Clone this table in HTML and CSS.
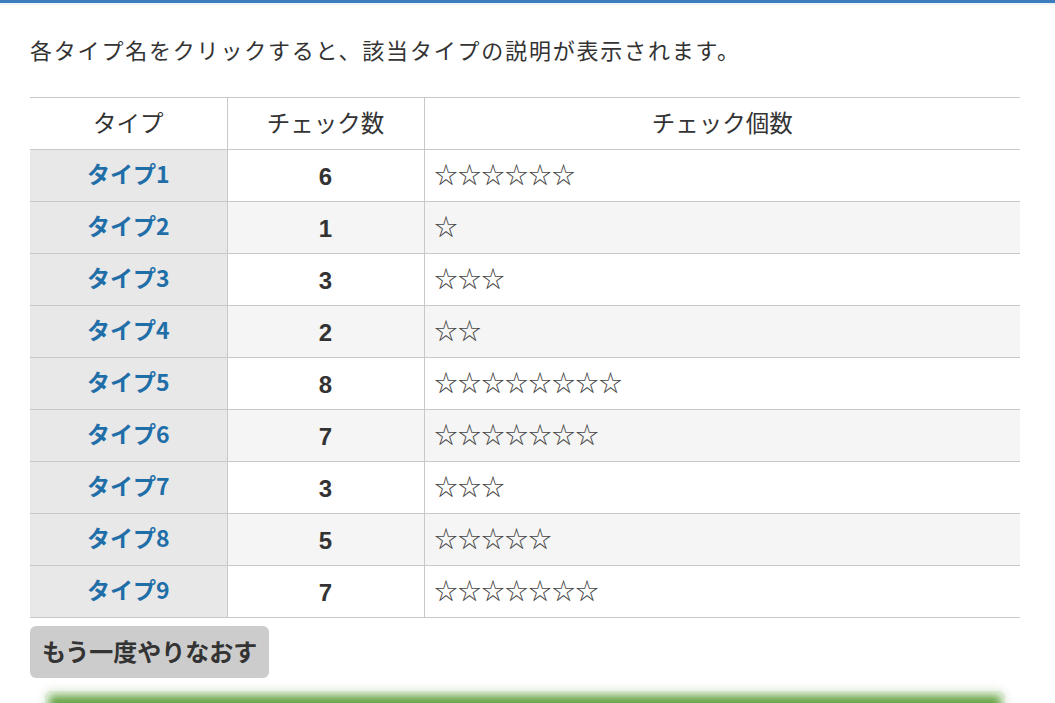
FILE: index.html
```html
<!DOCTYPE html>
<html lang="ja">
<head>
    <meta charset="UTF-8" />
    <meta name="viewport" content="width=device-width, initial-scale=1.0" />
    <title>診断結果</title>
    <link rel="stylesheet" href="styles.css">
</head>
<body>
    <div class="top-bar"></div>
    <div class="container">
        <p class="lead">各タイプ名をクリックすると、該当タイプの説明が表示されます。</p>
        <table class="result-table">
            <thead>
                <tr>
                    <th class="col-type">タイプ</th>
                    <th class="col-count">チェック数</th>
                    <th>チェック個数</th>
                </tr>
            </thead>
            <tbody>
                <tr><td class="type-name"><a href="#">タイプ1</a></td><td class="count">6</td><td class="stars">☆☆☆☆☆☆</td></tr>
                <tr><td class="type-name"><a href="#">タイプ2</a></td><td class="count">1</td><td class="stars">☆</td></tr>
                <tr><td class="type-name"><a href="#">タイプ3</a></td><td class="count">3</td><td class="stars">☆☆☆</td></tr>
                <tr><td class="type-name"><a href="#">タイプ4</a></td><td class="count">2</td><td class="stars">☆☆</td></tr>
                <tr><td class="type-name"><a href="#">タイプ5</a></td><td class="count">8</td><td class="stars">☆☆☆☆☆☆☆☆</td></tr>
                <tr><td class="type-name"><a href="#">タイプ6</a></td><td class="count">7</td><td class="stars">☆☆☆☆☆☆☆</td></tr>
                <tr><td class="type-name"><a href="#">タイプ7</a></td><td class="count">3</td><td class="stars">☆☆☆</td></tr>
                <tr><td class="type-name"><a href="#">タイプ8</a></td><td class="count">5</td><td class="stars">☆☆☆☆☆</td></tr>
                <tr><td class="type-name"><a href="#">タイプ9</a></td><td class="count">7</td><td class="stars">☆☆☆☆☆☆☆</td></tr>
            </tbody>
        </table>
        <button type="button" class="retry-btn">もう一度やりなおす</button>
        <div class="next-wrap">
            <button type="button" class="next-btn"></button>
        </div>
    </div>
</body>
</html>
```

FILE: styles.css
```css
/* Global Styles */
body {
    margin: 0;
    font-family: "Noto Sans CJK JP", "Noto Sans", sans-serif;
    color: #333;
    background-color: #fff;
}

.top-bar {
    height: 3px;
    background-color: #3d7dbd;
    border-bottom: 2px solid #eef3f8;
}

.container {
    padding: 0 35px 0 30px;
}

.lead {
    font-size: 22px;
    line-height: 32px;
    margin: 28px 0 32px;
    letter-spacing: 1.8px;
}

/* Result table */
.result-table {
    width: 100%;
    border-collapse: collapse;
    border-top: 1px solid #c8c8c8;
    border-bottom: 1px solid #c8c8c8;
}

.result-table th,
.result-table td {
    height: 52px;
    padding: 0 10px;
    border-bottom: 1px solid #c8c8c8;
    box-sizing: border-box;
}

.result-table th {
    font-size: 23.5px;
    font-weight: normal;
    text-align: center;
    padding-bottom: 3px;
}

.result-table th + th,
.result-table td + td {
    border-left: 1px solid #c8c8c8;
}

.col-type,
.col-count {
    width: 197px;
}

.result-table tbody tr:nth-child(even) {
    background-color: #f5f5f5;
}

.type-name {
    background-color: #e8e8e8;
    text-align: center;
    font-size: 23px;
    font-weight: bold;
    padding-bottom: 5px !important;
}

.type-name a {
    color: #1f6ea8;
    text-decoration: none;
}

.count {
    text-align: center;
    font-family: "Liberation Sans", "Noto Sans", sans-serif;
    font-size: 24px;
    font-weight: bold;
    padding-top: 3px !important;
}

.stars {
    font-size: 23px;
    letter-spacing: 0.5px;
    color: #444;
    padding-bottom: 5px !important;
}

/* Buttons */
.retry-btn {
    display: block;
    margin-top: 8px;
    background-color: #cccccc;
    color: #333;
    border: none;
    border-radius: 6px;
    padding: 0 12px 3px;
    height: 52px;
    font-family: inherit;
    font-size: 24px;
    font-weight: bold;
    cursor: pointer;
}

.next-wrap {
    padding: 13px 15px 0;
}

.next-btn {
    display: block;
    width: 100%;
    height: 40px;
    border: none;
    border-radius: 8px;
    background: linear-gradient(#6faa4f, #5b9a3c);
    box-shadow: 0 0 8px 4px rgba(255, 255, 255, 0.9) inset, 0 0 10px rgba(90, 150, 60, 0.3);
}
```
